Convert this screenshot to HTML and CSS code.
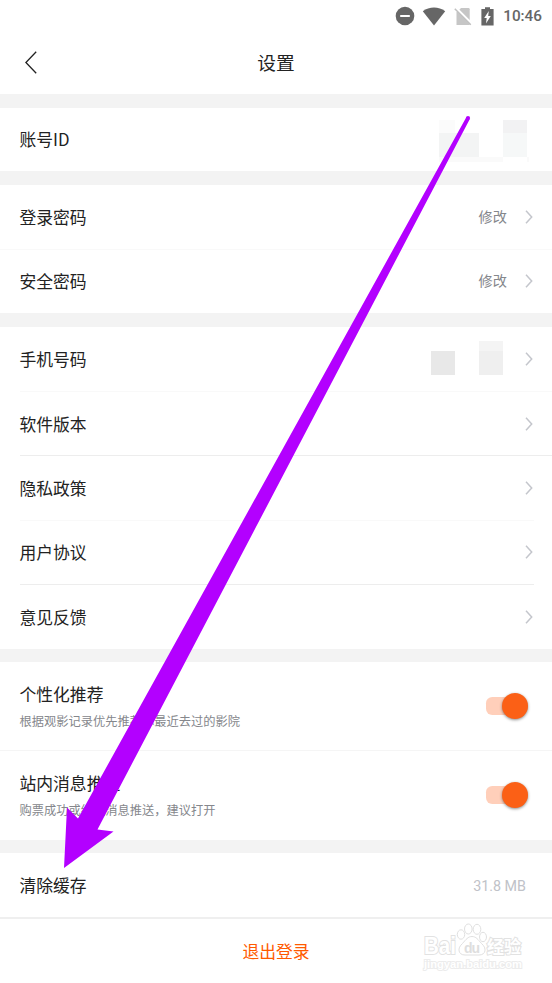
FILE: index.html
```html
<!doctype html>
<html lang="zh-CN">
<head>
<meta charset="utf-8">
<title>设置</title>
<meta name="viewport" content="width=device-width,initial-scale=1">
<link rel="stylesheet" href="styles.css">
</head>
<body>
<svg class="defs" width="0" height="0">
  <symbol id="chevron" viewBox="0 0 8 14"><path d="M1 .8 6.7 7 1 13.2" fill="none" stroke="#c4c6cc" stroke-width="1.5"/></symbol>
</svg>

<div class="statusbar">
  <svg class="dnd" width="20" height="20" viewBox="0 0 20 20"><circle cx="10" cy="10" r="9.3" fill="#666"/><path d="M5.2 10h9.6" stroke="#fff" stroke-width="2"/></svg>
  <svg class="wifi" width="24" height="19" viewBox="0 0 24 19"><path d="M.8 4.3C7.2-.7 16.8-.7 23.2 4.3L12 18.5z" fill="#666"/></svg>
  <svg class="sim" width="18" height="19" viewBox="0 0 18 19"><path d="M7 1h7.5q1.2 0 1.2 1.2V18H2.5V5.5z" fill="#c6c6c6"/><path d="M1.6 1 17.6 17" stroke="#fff" stroke-width="3"/><path d="M.8 1.8 16.8 17.8" stroke="#c0c0c0" stroke-width="1.5"/></svg>
  <svg class="battery" width="13" height="19" viewBox="0 0 13 19"><path d="M4 .3h5V2h3.6v16.6H.4V2H4z" fill="#666"/><path d="M7.8 4 3.2 11h2.5l-.7 5.5L9.8 9H7.2z" fill="#fff"/></svg>
  <span class="clock">10:46</span>
</div>

<header class="titlebar">
  <svg class="back" width="12" height="23" viewBox="0 0 12 23"><path d="M11.2.8.9 11.5l10.3 10.7" fill="none" stroke="#222" stroke-width="1.3"/></svg>
  <h1>设置</h1>
</header>

<main>
  <section class="group account">
    <div class="row">
      <span class="label">账号ID</span>
      <svg class="mask-id" width="90" height="42" viewBox="0 0 90 42"><path d="M0 0h16v13H0z" fill="#fbfbfb"/><path d="M0 13h40v24H0z" fill="#f3f4f4"/><path d="M64 0h24v13H64z" fill="#f2f2f3"/><path d="M64 13h24v24H64z" fill="#f6f8f8"/><path d="M0 37h64v5H0zM88 37h2v5h-2z" fill="#fafafa"/></svg>
    </div>
  </section>

  <section class="group passwords">
    <div class="row line-faint full"><span class="label">登录密码</span><span class="value">修改</span><svg class="chevron"><use href="#chevron"/></svg></div>
    <div class="row"><span class="label">安全密码</span><span class="value">修改</span><svg class="chevron"><use href="#chevron"/></svg></div>
  </section>

  <section class="group about">
    <div class="row line-faint">
      <span class="label">手机号码</span>
      <svg class="mask-phone" width="72" height="34" viewBox="0 0 72 34"><path d="M0 10h24v24H0z" fill="#e8e8e8"/><path d="M48 0h24v10H48z" fill="#f4f4f4"/><path d="M48 10h24v24H48z" fill="#efefef"/></svg>
      <svg class="chevron"><use href="#chevron"/></svg>
    </div>
    <div class="row line"><span class="label">软件版本</span><svg class="chevron"><use href="#chevron"/></svg></div>
    <div class="row line-faint inset"><span class="label">隐私政策</span><svg class="chevron"><use href="#chevron"/></svg></div>
    <div class="row line inset"><span class="label">用户协议</span><svg class="chevron"><use href="#chevron"/></svg></div>
    <div class="row"><span class="label">意见反馈</span><svg class="chevron"><use href="#chevron"/></svg></div>
  </section>

  <section class="group">
    <div class="row tall line-faint full">
      <div class="text"><span class="label">个性化推荐</span><p class="hint">根据观影记录优先推荐你最近去过的影院</p></div>
      <span class="switch"></span>
    </div>
    <div class="row tall">
      <div class="text"><span class="label">站内消息推送</span><p class="hint">购票成功或纷玩消息推送，建议打开</p></div>
      <span class="switch"></span>
    </div>
  </section>

  <section class="group">
    <div class="row"><span class="label">清除缓存</span><span class="size">31.8 MB</span></div>
  </section>
</main>

<footer class="logout">退出登录</footer>

<svg class="watermark" width="108" height="54" viewBox="0 0 108 54">
  <g class="wm-text">
    <text x="4" y="33" font-size="23" textLength="32" lengthAdjust="spacingAndGlyphs">Bai</text>
    <text class="wm-cjk" x="67" y="32" font-size="17">经验</text>
    <text class="wm-url" x="4" y="47" font-size="11.5" textLength="98" lengthAdjust="spacingAndGlyphs">jingyan.baidu.com</text>
  </g>
  <g fill="#fff" stroke="#e0e0e0" stroke-width="1">
    <ellipse cx="41" cy="13.5" rx="3.7" ry="4.7"/><ellipse cx="48.3" cy="8" rx="3.8" ry="5"/><ellipse cx="57" cy="8.3" rx="3.8" ry="5"/><ellipse cx="63" cy="16" rx="3.5" ry="4.7"/>
    <path d="M52 15.5c-4 0-6 3-9.5 7-5.5 4.5-4.5 11.5 2.5 11.5h14c7 0 8-7 2.5-11.5-3.5-4-5.5-7-9.5-7z"/>
  </g>
  <text class="wm-du" x="44" y="31.5" font-size="14" textLength="16">du</text>
</svg>

<svg class="pointer" width="552" height="983" viewBox="0 0 552 983"><path d="M466.3 117.3 469.7 119.2 97.5 829.5 113.5 831.5 64 868 67 807.5 78 818.5z" fill="#b300ff"/><circle cx="468" cy="118" r="2.1" fill="#b300ff"/></svg>
</body>
</html>
```
FILE: styles.css
```css
*{box-sizing:border-box;}
body{margin:0;width:552px;height:983px;position:relative;overflow:hidden;background:#fff;color:#222;font-family:"Noto Sans CJK SC",sans-serif;display:flex;flex-direction:column;}
h1,p{margin:0;font-weight:400;}
svg{display:block;flex:none;}
.defs{position:absolute;}

.statusbar{height:32px;padding-right:10px;display:flex;align-items:center;justify-content:flex-end;}
.dnd{margin-right:7px;}
.wifi{margin-right:8px;}
.sim{margin-right:9.5px;}
.battery{margin-right:9px;}
.clock{font:500 15.3px/34px Roboto,sans-serif;color:#666;}

.titlebar{height:62px;padding:0 25px;display:grid;grid-template-columns:12px 1fr 12px;align-items:center;}
.titlebar h1{font-size:18.7px;line-height:60px;padding-bottom:2px;text-align:center;}
.back{margin-top:-1px;}

/* grey band above each block of rows */
.group{padding-top:13px;background:#f3f3f3;}
.row{height:64.4px;padding:0 19.5px;display:flex;align-items:center;position:relative;background:#fff;}
.account,.passwords,.about{padding-top:13.6px;}
.account .row{height:63.8px;}
.passwords .row{height:64.2px;}
.label{font-size:16.8px;line-height:24px;margin-right:auto;}
.line::after,.line-faint::after{content:"";position:absolute;left:19.5px;right:0;bottom:-.5px;height:1px;background:#ededed;z-index:1;}
.line-faint::after{background:#f9f9f9;}
.full::after{left:0;}
.inset::after{right:18.5px;}
.tall.line-faint::after{background:#f5f5f5;}
.value{font-size:14.2px;line-height:20px;padding-bottom:2px;color:#85878c;margin-right:17.5px;}
.chevron{width:8px;height:14px;}
.mask-id{margin:4px 4px 0 0;}
.mask-phone{margin:0 21.5px 3px 0;}

.tall{height:89px;}
.text{flex:1;}
.tall .label{display:block;}
.hint{font-size:12.26px;line-height:18px;margin-top:6px;color:#85878c;}
.switch{width:42px;height:18px;margin-right:4.5px;display:flex;align-items:center;justify-content:flex-end;background:#ffcfba;border-radius:9px 13px 13px 9px;}
.switch::after{content:"";flex:none;width:26px;height:26px;border-radius:50%;background:#fb6016;box-shadow:0 1px 3px rgba(0,0,0,.45);}
.size{font:14.3px Roboto,sans-serif;color:#c0c2c8;margin-right:6.5px;padding-top:1px;}

.logout{flex:1;border-top:2px solid #efefef;text-align:center;font-size:16.8px;line-height:65px;color:#ff5a00;}

.watermark{position:absolute;left:420px;top:921px;}
.wm-text{font-family:"Liberation Sans",sans-serif;font-weight:700;fill:#fff;stroke:#e2e2e2;stroke-width:2;paint-order:stroke;}
.wm-cjk{font-family:"Noto Sans CJK SC",sans-serif;}
.wm-url{stroke:#ececec;}
.wm-du{font-family:"Liberation Sans",sans-serif;font-weight:700;fill:#dedede;}
.pointer{position:absolute;left:0;top:0;z-index:2;}
```
